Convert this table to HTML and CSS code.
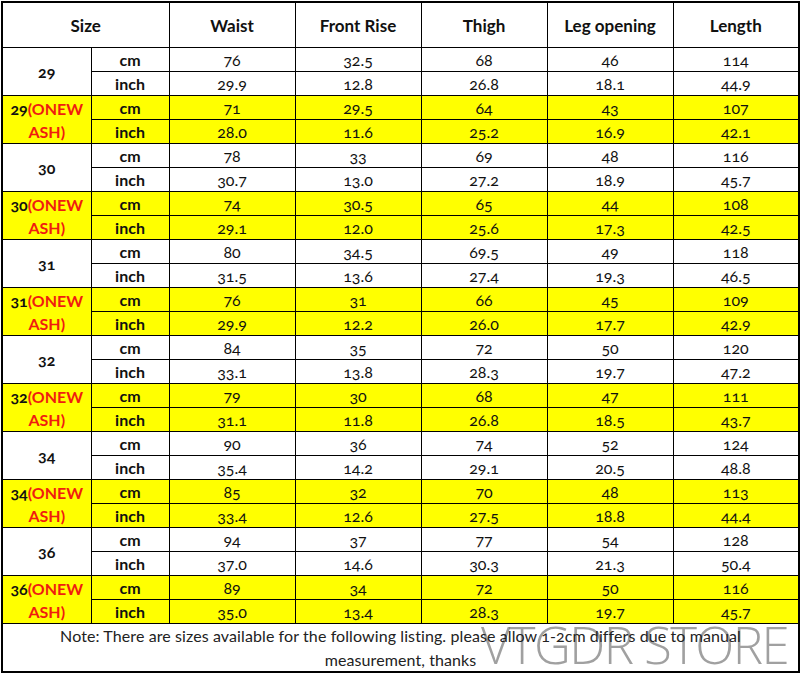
FILE: index.html
```html
<!DOCTYPE html>
<html>
<head>
<meta charset="utf-8">
<link rel="stylesheet" href="styles.css">
</head>
<body>
<table class="chart">
  <colgroup>
    <col class="c-size"><col class="c-unit"><col class="c-val"><col class="c-val"><col class="c-val"><col class="c-val"><col class="c-val">
  </colgroup>
  <thead>
    <tr class="head">
      <th colspan="2">Size</th><th>Waist</th><th>Front Rise</th><th>Thigh</th><th>Leg opening</th><th>Length</th>
    </tr>
  </thead>
  <tbody id="rows">
  </tbody>
  <tfoot>
    <tr class="note">
      <td colspan="7">
        <div class="note-wrap">
          <span class="watermark">VTGDR STORE</span>
          <p class="note-text">Note: There are sizes available for the following listing. please allow 1-2cm differs due to manual measurement, thanks</p>
        </div>
      </td>
    </tr>
  </tfoot>
</table>
<script src="script.js"></script>
</body>
</html>
```
FILE: styles.css
```css
html, body {
  margin: 0;
  padding: 0;
  background: #ffffff;
}
body {
  padding: 1px 0 0 1px;
}
.chart {
  border-collapse: collapse;
  width: 798px;
  table-layout: fixed;
  font-family: "Lato", "Open Sans", sans-serif;
  font-variant-numeric: oldstyle-nums;
  color: #111;
  border: 2px solid #000;
}
.c-size { width: 89px; }
.c-unit { width: 78px; }
.c-val { width: 126px; }
.chart th, .chart td {
  border: 1px solid #000;
  padding: 0;
  text-align: center;
  vertical-align: middle;
}
.head th {
  height: 44px;
  font-size: 17px;
  font-weight: 700;
}
.data td {
  height: 22px;
  font-size: 16px;
  line-height: 22px;
  padding-top: 1px;
}
.data td.unit {
  font-weight: 700;
}
.data td.size {
  font-weight: 700;
  font-size: 16px;
  line-height: 23px;
  padding: 0;
  height: auto;
}
.red {
  color: #f01c10;
}
.yellow td {
  background: #ffff00;
}
.note td {
  height: 47px;
}
.note-wrap {
  position: relative;
  height: 47px;
}
.note-text {
  position: relative;
  margin: 0;
  padding: 0 50px;
  font-size: 16px;
  line-height: 24px;
  letter-spacing: 0.1px;
  color: #222;
}
.watermark {
  position: absolute;
  right: 10px;
  top: 0;
  font-family: "Open Sans", sans-serif;
  font-weight: 300;
  font-size: 51px;
  line-height: 40px;
  letter-spacing: -1.6px;
  color: rgba(120, 120, 120, 0.7);
  white-space: nowrap;
}
```
FILE: script.js
```js
const data = [
  ["29", false, [76,32.5,68,46,114], [29.9,12.8,26.8,18.1,44.9]],
  ["29", true, [71,29.5,64,43,107], ["28.0",11.6,25.2,16.9,42.1]],
  ["30", false, [78,33,69,48,116], [30.7,"13.0",27.2,18.9,45.7]],
  ["30", true, [74,30.5,65,44,108], [29.1,"12.0",25.6,17.3,42.5]],
  ["31", false, [80,34.5,69.5,49,118], [31.5,13.6,27.4,19.3,46.5]],
  ["31", true, [76,31,66,45,109], [29.9,12.2,"26.0",17.7,42.9]],
  ["32", false, [84,35,72,50,120], [33.1,13.8,28.3,19.7,47.2]],
  ["32", true, [79,30,68,47,111], [31.1,11.8,26.8,18.5,43.7]],
  ["34", false, [90,36,74,52,124], [35.4,14.2,29.1,20.5,48.8]],
  ["34", true, [85,32,70,48,113], [33.4,12.6,27.5,18.8,44.4]],
  ["36", false, [94,37,77,54,128], ["37.0",14.6,30.3,21.3,50.4]],
  ["36", true, [89,34,72,50,116], ["35.0",13.4,28.3,19.7,45.7]]
];
const body = document.getElementById("rows");
for (const [size, wash, cm, inch] of data) {
  const r1 = document.createElement("tr");
  r1.className = "data" + (wash ? " yellow" : "");
  const sc = document.createElement("td");
  sc.className = "size";
  sc.rowSpan = 2;
  sc.innerHTML = wash ? size + '<span class="red">(ONEW</span><br><span class="red">ASH)</span>' : size;
  r1.appendChild(sc);
  r1.insertAdjacentHTML("beforeend", '<td class="unit">cm</td>' + cm.map(v => "<td>" + v + "</td>").join(""));
  const r2 = document.createElement("tr");
  r2.className = "data" + (wash ? " yellow" : "");
  r2.innerHTML = '<td class="unit">inch</td>' + inch.map(v => "<td>" + v + "</td>").join("");
  body.appendChild(r1);
  body.appendChild(r2);
}
```
